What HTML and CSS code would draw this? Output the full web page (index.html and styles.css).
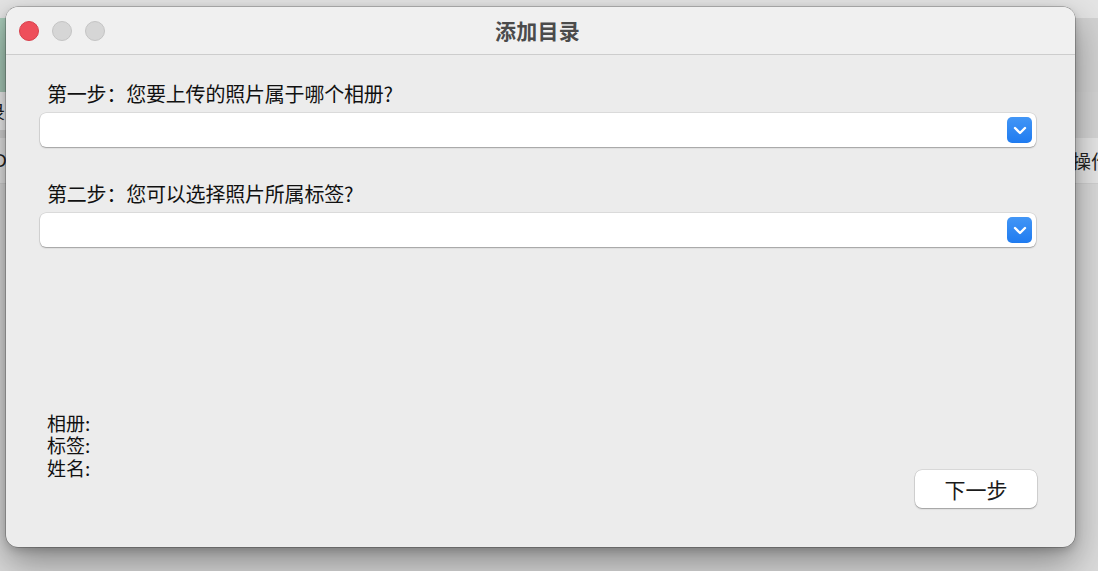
FILE: index.html
```html
<!DOCTYPE html>
<html lang="zh-CN">
<head>
<meta charset="utf-8">
<title>添加目录</title>
<link rel="stylesheet" href="styles.css">
</head>
<body>
<div class="desktop">
  <div class="bg-app">
    <div class="bg-top"></div>
    <div class="bg-band"></div>
    <div class="bg-row1"><span class="bg-cut1">录</span></div>
    <div class="bg-sep"></div>
    <div class="bg-head"><span class="bg-cut2">D</span><span class="bg-op">操作</span></div>
    <div class="bg-rest"></div>
  </div>

  <div class="window">
    <div class="titlebar">
      <div class="lights">
        <span class="light red"></span>
        <span class="light gray"></span>
        <span class="light gray"></span>
      </div>
      <div class="title">添加目录</div>
    </div>
    <div class="content">
      <div class="field">
        <div class="label">第一步：您要上传的照片属于哪个相册?</div>
        <div class="select">
          <span class="select-btn">
            <svg width="14" height="9" viewBox="0 0 14 9"><path d="M2 2 L7 7 L12 2" fill="none" stroke="#fff" stroke-width="2.4" stroke-linecap="round" stroke-linejoin="round"/></svg>
          </span>
        </div>
      </div>
      <div class="field second">
        <div class="label">第二步：您可以选择照片所属标签?</div>
        <div class="select">
          <span class="select-btn">
            <svg width="14" height="9" viewBox="0 0 14 9"><path d="M2 2 L7 7 L12 2" fill="none" stroke="#fff" stroke-width="2.4" stroke-linecap="round" stroke-linejoin="round"/></svg>
          </span>
        </div>
      </div>
      <div class="spacer"></div>
      <div class="footer">
        <div class="info">
          <div>相册:</div>
          <div>标签:</div>
          <div>姓名:</div>
        </div>
        <button class="next">下一步</button>
      </div>
    </div>
  </div>
</div>
</body>
</html>
```

FILE: styles.css
```css
* { box-sizing: border-box; }
html, body { margin: 0; padding: 0; }
body {
  width: 1098px;
  height: 571px;
  overflow: hidden;
  font-family: "Noto Sans CJK SC", "Noto Sans", sans-serif;
  color: #1a1a1a;
}
.desktop {
  position: relative;
  width: 1098px;
  height: 571px;
  overflow: hidden;
}
.bg-app {
  display: flex;
  flex-direction: column;
  width: 100%;
  height: 100%;
  background: #dcdcdc;
}
.bg-top { height: 18px; background: #e4e4e4; }
.bg-band {
  height: 74px;
  background: linear-gradient(to right, #a8cbb9 0 6px, #d2d2d2 6px);
}
.bg-row1 {
  height: 38px;
  background: linear-gradient(to right, #f1f1f1 0 6px, #d4d4d4 6px);
  display: flex;
  align-items: center;
  font-size: 18px;
  color: #222;
}
.bg-cut1 { margin-left: -13px; }
.bg-sep { height: 8px; background: #d6d6d6; }
.bg-head {
  height: 46px;
  background: #e6e6e6;
  display: flex;
  align-items: center;
  justify-content: space-between;
  font-size: 19px;
  color: #222;
  border-bottom: 1px solid #d2d2d2;
}
.bg-cut2 { margin-left: -7px; font-family: "Liberation Sans", sans-serif; }
.bg-op { margin-right: -12px; }
.bg-rest {
  flex: 1;
  background: #dadada;
}

.window {
  position: absolute;
  left: 6px;
  top: 7px;
  width: 1069px;
  height: 540px;
  border-radius: 12px;
  background: #ececec;
  box-shadow: 0 0 0 0.5px rgba(0,0,0,0.4), 0 16px 36px rgba(0,0,0,0.38), 0 3px 8px rgba(0,0,0,0.18);
  display: flex;
  flex-direction: column;
  overflow: hidden;
}
.titlebar {
  position: relative;
  height: 48px;
  background: #f0f0f0;
  border-bottom: 1px solid #cdcdcd;
  display: flex;
  align-items: center;
  justify-content: center;
  flex-shrink: 0;
}
.lights {
  position: absolute;
  left: 13px;
  top: 14px;
  display: flex;
  gap: 13px;
}
.light {
  width: 20px;
  height: 20px;
  border-radius: 50%;
}
.light.red { background: #ee4f5b; border: 1px solid #d8404c; }
.light.gray { background: #d6d6d6; border: 1px solid #c4c4c4; }
.title {
  font-size: 21px;
  font-weight: 700;
  color: #4b4b4b;
  letter-spacing: 0.2px;
  margin-top: -2px;
  margin-left: -6px;
}
.content {
  flex: 1;
  display: flex;
  flex-direction: column;
  padding: 27px 39px 39px 34px;
}
.field { display: flex; flex-direction: column; gap: 7px; }
.field.second { margin-top: 35px; }
.label {
  font-size: 20px;
  line-height: 24px;
  padding-left: 7px;
  letter-spacing: -0.2px;
  color: #111;
}
.select {
  height: 34px;
  background: #fff;
  border-radius: 6px;
  box-shadow: 0 0 0 0.5px rgba(0,0,0,0.14), 0 1px 1.5px rgba(0,0,0,0.28);
  display: flex;
  justify-content: flex-end;
  align-items: center;
  padding-right: 4px;
}
.select-btn {
  width: 25px;
  height: 26px;
  border-radius: 5px;
  background: linear-gradient(#4296f6, #1f7bf0);
  display: flex;
  align-items: center;
  justify-content: center;
}
.spacer { flex: 1; }
.footer {
  display: flex;
  justify-content: space-between;
  align-items: flex-end;
}
.info {
  padding-left: 7px;
  font-size: 19px;
  line-height: 22.5px;
  color: #111;
  margin-bottom: 29px;
}
.next {
  width: 122px;
  height: 38px;
  margin-right: -1px;
  border: none;
  border-radius: 7px;
  background: #fff;
  box-shadow: 0 0 0 0.5px rgba(0,0,0,0.16), 0 1px 1.5px rgba(0,0,0,0.28);
  font-family: "Noto Sans CJK SC", sans-serif;
  font-size: 21px;
  color: #1a1a1a;
  padding: 0;
}
```
